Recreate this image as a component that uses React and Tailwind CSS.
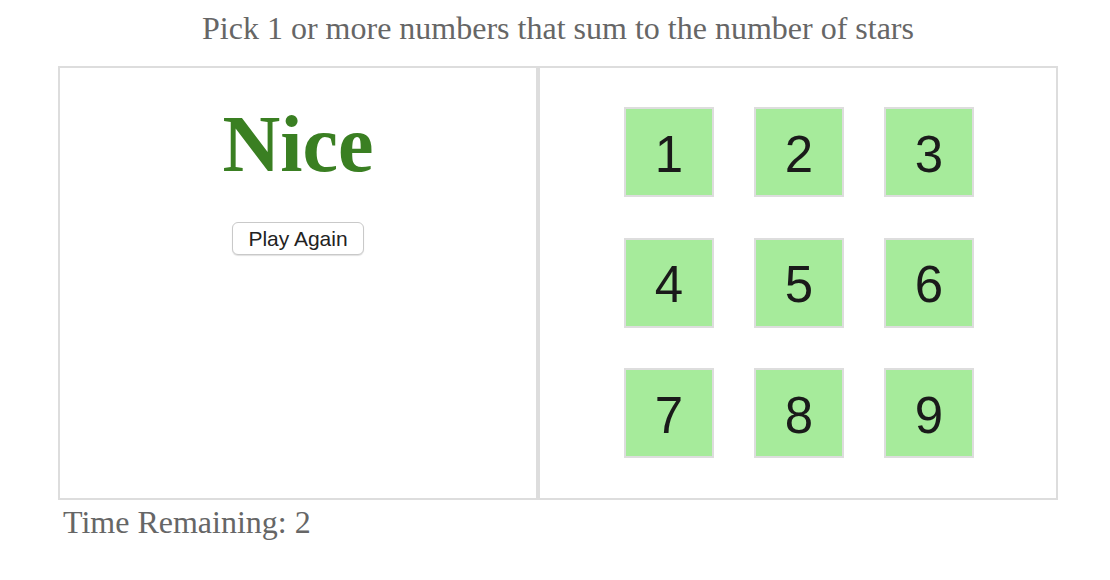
import React from 'react';

const NUMBERS = [1, 2, 3, 4, 5, 6, 7, 8, 9];

export default function App() {
  return (
    <div className="w-[1110px] h-[580px] bg-white">
      <div className="ml-[58px] w-[1000px] pt-[10px] font-['Liberation_Serif',serif]">
        {/* Help text */}
        <div className="text-center text-[32px] leading-[36px] text-[#666]">
          Pick 1 or more numbers that sum to the number of stars
        </div>

        {/* Body */}
        <div className="mt-[20px] flex">
          <div className="w-[480px] border-2 border-[#ddd] pt-[36px] text-center">
            <div className="text-[80px] leading-[80px] font-bold text-[#3a7f22]">Nice</div>
            <button className="mt-[38px] w-[132px] h-[33px] rounded-[6px] border border-[#c9c9c9] bg-white shadow-[0_1px_1px_rgba(0,0,0,0.12)] font-['Liberation_Sans',Arial,sans-serif] text-[21px] leading-none text-[#222]">
              Play Again
            </button>
          </div>
          <div className="w-[520px] border-2 border-[#ddd] pt-[39px] pb-[40px] flex justify-center">
            <div className="grid grid-cols-3 gap-x-[40px] gap-y-[40.5px] ml-[2px]">
              {NUMBERS.map((n) => (
                <button
                  key={n}
                  className="w-[90px] h-[90px] border-2 border-[#ddd] bg-[#a6eb9b] flex items-center justify-center pt-[4px] font-['Liberation_Sans',Arial,sans-serif] text-[51px] leading-none text-[#1a1a1a]"
                >
                  {n}
                </button>
              ))}
            </div>
          </div>
        </div>

        {/* Timer */}
        <div className="mt-[4px] ml-[5px] text-[32px] leading-[36px] text-[#666]">
          Time Remaining: 2
        </div>
      </div>
    </div>
  );
}
